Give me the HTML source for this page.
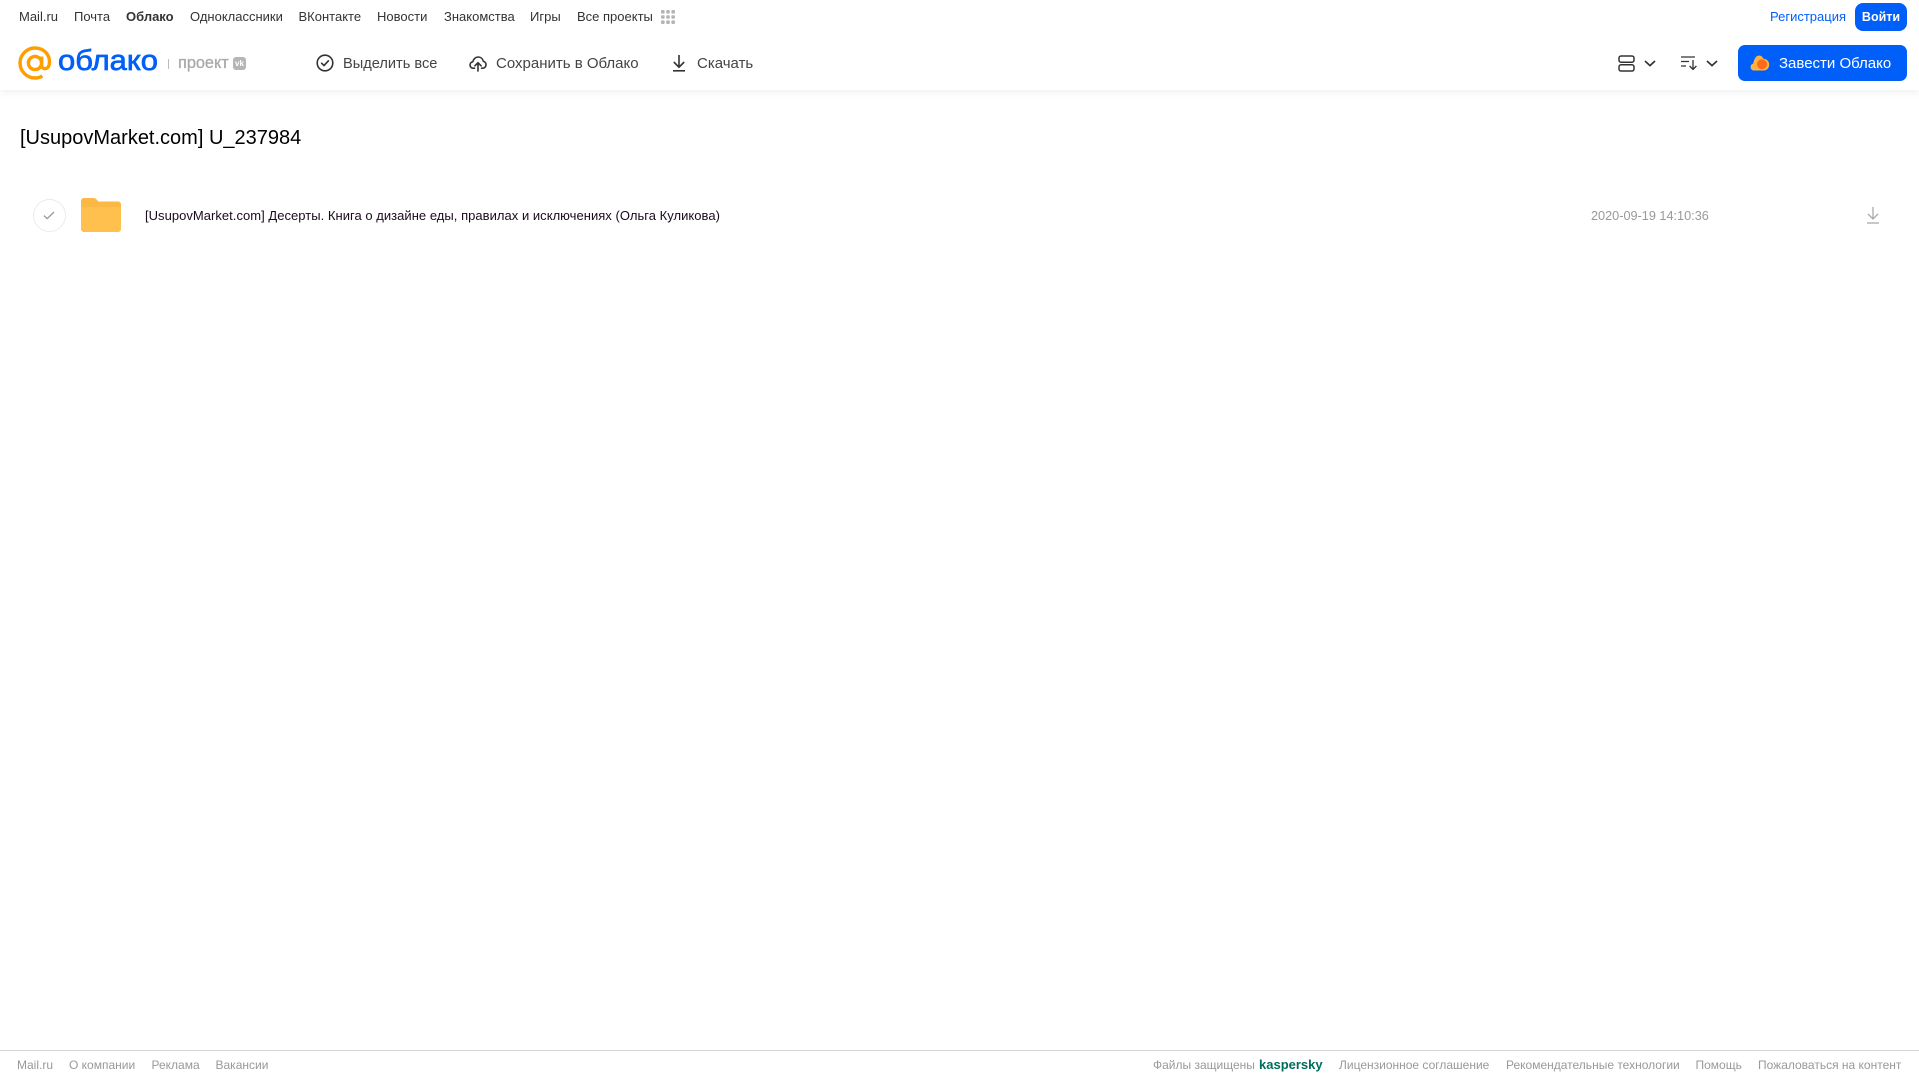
<!DOCTYPE html>
<html lang="ru">
<head>
<meta charset="utf-8">
<title>[UsupovMarket.com] U_237984</title>
<style>
html,body{margin:0;padding:0;background:#fff;width:1919px;height:1079px;overflow:hidden}
body{font-family:"Liberation Sans",Arial,sans-serif;position:relative}
.t{position:absolute;white-space:nowrap;line-height:16px;font-size:12px}
.n{top:9px;color:#333;font-size:13px}
.b{top:56px;font-size:15px;color:#444;line-height:16px}
.f{top:1057px;color:#999}
svg{position:absolute;display:block}
#shadow{position:absolute;left:0;top:0;width:1919px;height:90px;background:#fff;box-shadow:0 2px 8px rgba(0,0,0,.07)}
#fl{position:absolute;left:0;top:1050px;width:1919px;height:1px;background:#d8d8d8}
</style>
</head>
<body>
<div id="shadow"></div>

<span class="t n" style="left:19px">Mail.ru</span>
<span class="t n" style="left:74px">Почта</span>
<span class="t n" style="left:126px;font-weight:bold">Облако</span>
<span class="t n" style="left:190px">Одноклассники</span>
<span class="t n" style="left:298.500px">ВКонтакте</span>
<span class="t n" style="left:377px">Новости</span>
<span class="t n" style="left:444px">Знакомства</span>
<span class="t n" style="left:530px">Игры</span>
<span class="t n" style="left:577px">Все проекты</span>
<svg style="left:661px;top:10px" width="14" height="14" viewBox="0 0 14 14" fill="#b5b5b5">
<rect x="0" y="0" width="3.6" height="3.6" rx="1"/><rect x="5.2" y="0" width="3.6" height="3.6" rx="1"/><rect x="10.4" y="0" width="3.6" height="3.6" rx="1"/>
<rect x="0" y="5.2" width="3.6" height="3.6" rx="1"/><rect x="5.2" y="5.2" width="3.6" height="3.6" rx="1"/><rect x="10.4" y="5.2" width="3.6" height="3.6" rx="1"/>
<rect x="0" y="10.4" width="3.6" height="3.6" rx="1"/><rect x="5.2" y="10.4" width="3.6" height="3.6" rx="1"/><rect x="10.4" y="10.4" width="3.6" height="3.6" rx="1"/>
</svg>

<span class="t" style="left:1770px;top:9px;font-size:13px;color:#005ff9">Регистрация</span>
<div style="position:absolute;left:1855px;top:3px;width:52px;height:28px;border-radius:8px;background:#005ff9;color:#fff;font-size:12.5px;font-weight:bold;text-align:center;line-height:28px">Войти</div>

<!-- logo -->
<svg style="left:18px;top:46px" width="34" height="34" viewBox="0 0 34 34" fill="none" stroke="#ff9e00" stroke-width="3.4">
<circle cx="17" cy="17" r="6.6"/>
<path d="M23.6 10.500V19c0 5 6.600 5 7.600-.5C32.800 9 26 2 17 2 8.800 2 2 8.800 2 17s6.800 15 15 15c3 0 5.400-.8 7.400-2"/>
</svg>
<svg style="left:56px;top:40px" width="106" height="40">
<text x="2" y="30" font-family="'Liberation Sans',sans-serif" font-size="29" fill="#005ff9" stroke="#005ff9" stroke-width=".7" textLength="100" lengthAdjust="spacingAndGlyphs">облако</text>
</svg>
<div style="position:absolute;left:168px;top:59px;width:1px;height:10px;background:#bbb"></div>
<span class="t" style="left:178px;top:54px;font-size:16.300px;color:#a9a9a9;line-height:18px;-webkit-text-stroke:.3px #a9a9a9">проект</span>
<div style="position:absolute;left:233px;top:57px;width:13px;height:13px;border-radius:3px;background:#b5b5b5;color:#fff;font-size:8px;font-weight:bold;line-height:13px;text-align:center">vk</div>

<!-- toolbar -->
<svg style="left:316px;top:54px" width="18" height="18" viewBox="0 0 18 18" fill="none" stroke="#333" stroke-width="1.6">
<circle cx="9" cy="9" r="7.8"/><path d="M5.6 9.200l2.400 2.400 4.400-4.800" stroke-linecap="round" stroke-linejoin="round"/>
</svg>
<span class="t b" style="left:343px;font-size:14.6px">Выделить все</span>

<svg style="left:469px;top:54px" width="18" height="18" viewBox="0 0 18 18" fill="none" stroke="#333" stroke-width="1.6" stroke-linecap="round" stroke-linejoin="round">
<path d="M5.500 14.200H4.200C2.400 14.200 1 12.800 1 11c0-1.600 1.200-3 2.800-3.200C4.400 5 6.600 3 9.200 3c2.600 0 4.600 1.800 5.100 4.300 1.600.3 2.700 1.700 2.700 3.400 0 1.900-1.500 3.500-3.400 3.500h-1"/>
<path d="M9 17V9M5.900 11.800L9 8.700l3.100 3.100"/>
</svg>
<span class="t b" style="left:496px">Сохранить в Облако</span>

<svg style="left:672px;top:54px" width="14" height="18" viewBox="0 0 14 18" fill="none" stroke="#333" stroke-width="1.6">
<path d="M7 1v12M1.800 8L7 13.200 12.200 8"/><path d="M1 16.800h12"/>
</svg>
<span class="t b" style="left:697px">Скачать</span>

<!-- right tools -->
<svg style="left:1618px;top:55px" width="17" height="17" viewBox="0 0 17 17" fill="none" stroke="#333" stroke-width="1.5">
<rect x="1" y="1" width="15" height="6.200" rx="2"/><rect x="1" y="9.800" width="15" height="6.200" rx="2"/>
</svg>
<svg style="left:1644px;top:60px" width="12" height="7" viewBox="0 0 12 7" fill="none" stroke="#333" stroke-width="1.7"><path d="M1 1l5 4.600L11 1"/></svg>
<svg style="left:1681px;top:55px" width="17" height="16" viewBox="0 0 17 16" fill="none" stroke="#333" stroke-width="1.3">
<path d="M0 2h14M0 6.500h8M0 11h5M12 5v9.500M8.600 11l3.400 3.500 3.400-3.500"/>
</svg>
<svg style="left:1706px;top:60px" width="12" height="7" viewBox="0 0 12 7" fill="none" stroke="#333" stroke-width="1.7"><path d="M1 1l5 4.600L11 1"/></svg>

<div style="position:absolute;left:1738px;top:45px;width:169px;height:36px;border-radius:7px;background:#005ff9"></div>
<svg style="left:1750px;top:54px" width="20" height="18" viewBox="0 0 20 18">
<path d="M4 16.500C1.800 16.500.6 14.800.6 13c0-1.800 1.200-3 2.600-3.400C3.800 6 5.800 1.500 9 1.500c2.400 0 3.800 1.800 4.400 3.200 3.200 0 5.800 2.500 5.800 5.900 0 3.400-2.400 5.900-5.600 5.900z" fill="#ffb33e"/>
<circle cx="12" cy="10.300" r="5" fill="#ff6a1a"/>
</svg>
<span class="t" style="left:1779px;top:56px;font-size:15px;color:#fff">Завести Облако</span>

<!-- title -->
<span class="t" style="left:20px;top:126px;font-size:20px;line-height:25px;color:#000">[UsupovMarket.com] U_237984</span>

<!-- row -->
<div style="position:absolute;left:33px;top:199px;width:31px;height:31px;border:1px solid #ebebeb;border-radius:50%"></div>
<svg style="left:43px;top:211px" width="12" height="9" viewBox="0 0 12 9" fill="none" stroke="#999" stroke-width="1.3"><path d="M1 4.600l3.200 3L11 1"/></svg>
<svg style="left:81px;top:198px" width="40" height="34" viewBox="0 0 40 34">
<path d="M0 3C0 1.300 1.300 0 3 0h9.500c1.200 0 2 .4 2.800 1.200L17.500 3.500H37c1.700 0 3 1.300 3 3V11H0z" fill="#fbb844"/>
<path d="M0 9h40v22c0 1.700-1.300 3-3 3H3c-1.700 0-3-1.300-3-3z" fill="#ffc04d"/>
</svg>
<span class="t" style="left:145px;top:208px;font-size:13px;letter-spacing:.03px;color:#1a0a1e">[UsupovMarket.com] Десерты. Книга о дизайне еды, правилах и исключениях (Ольга Куликова)</span>
<span class="t" style="left:1591px;top:208px;font-size:12.700px;color:#999">2020-09-19 14:10:36</span>
<svg style="left:1866px;top:207px" width="14" height="17" viewBox="0 0 14 17" fill="none" stroke="#aaa" stroke-width="1.3">
<path d="M7 0v12M2 7l5 5 5-5"/><path d="M1 16h12"/>
</svg>

<!-- footer -->
<div id="fl"></div>
<span class="t f" style="left:17px">Mail.ru</span>
<span class="t f" style="left:69px">О компании</span>
<span class="t f" style="left:151.500px">Реклама</span>
<span class="t f" style="left:215.500px">Вакансии</span>
<span class="t f" style="left:1153px">Файлы защищены</span>
<span class="t f" style="left:1259px;font-size:13px;font-weight:bold;color:#006d5c">kaspersky</span>
<span class="t f" style="left:1339px">Лицензионное соглашение</span>
<span class="t f" style="left:1506px">Рекомендательные технологии</span>
<span class="t f" style="left:1695.500px">Помощь</span>
<span class="t f" style="left:1758px">Пожаловаться на контент</span>
</body>
</html>
